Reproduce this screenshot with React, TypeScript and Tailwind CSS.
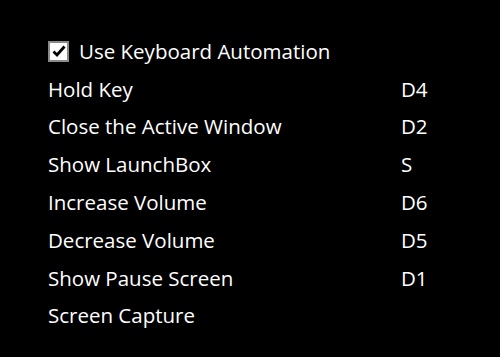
const rows: [string, string][] = [
  ["Hold Key", "D4"],
  ["Close the Active Window", "D2"],
  ["Show LaunchBox", "S"],
  ["Increase Volume", "D6"],
  ["Decrease Volume", "D5"],
  ["Show Pause Screen", "D1"],
  ["Screen Capture", ""],
];

const Checkbox = () => (
  <span className="grid size-[21px] shrink-0 place-items-center border-2 border-[#8a8a8a] bg-white">
    <svg viewBox="0 0 16 16" className="size-[16px]">
      <path d="M2.5 8.5 L6 12 L13.5 3.5" fill="none" stroke="#000" strokeWidth="2.8" />
    </svg>
  </span>
);

export default function App() {
  return (
    <div
      className="h-[357px] w-[500px] bg-black pl-[48px] pt-[32px] text-[20.5px] leading-none text-white"
      style={{ fontFamily: '"Open Sans", sans-serif' }}
    >
      <div className="flex h-[38px] items-center gap-[10px]">
        <Checkbox />
        <span>Use Keyboard Automation</span>
      </div>
      {rows.map(([label, key]) => (
        <div key={label} className="flex h-[37.8px] items-center">
          <span className="w-[353px]">{label}</span>
          <span>{key}</span>
        </div>
      ))}
    </div>
  );
}
